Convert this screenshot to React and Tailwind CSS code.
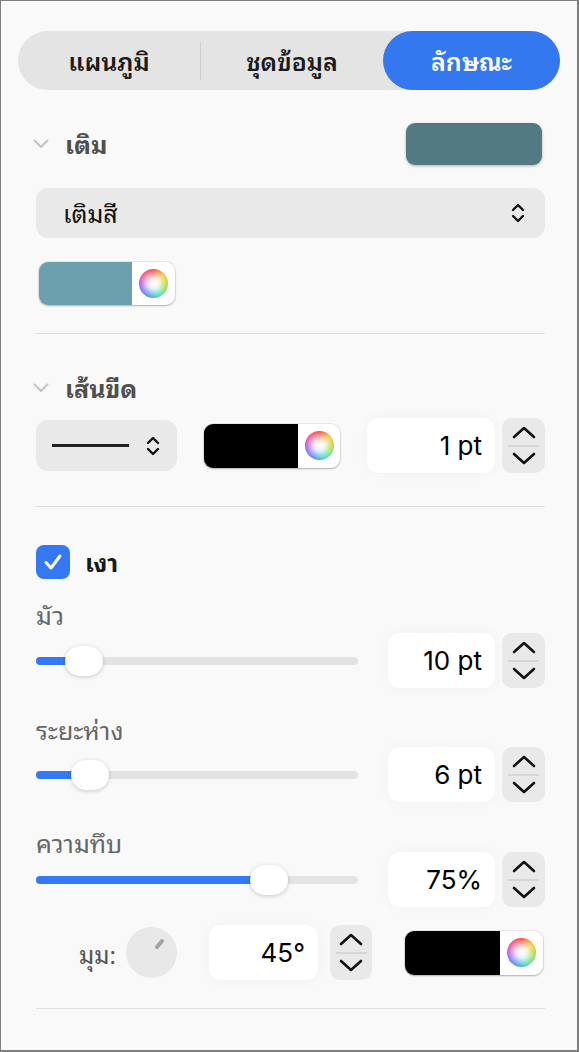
import React from 'react';

const font = "font-['Noto_Sans_Thai_Looped','Loma','Garuda','Tlwg_Typo','Norasi','Waree','Kinnari','Noto_Sans_Thai','Noto_Sans','Inter',sans-serif]";

function ChevronDown() {
  return (
    <svg width="16" height="10" viewBox="0 0 16 10" fill="none">
      <path d="M1.5 1.5L8 8L14.5 1.5" stroke="#c4c4c4" strokeWidth="2" strokeLinecap="round" strokeLinejoin="round" />
    </svg>
  );
}

function UpDown() {
  return (
    <svg width="14" height="22" viewBox="0 0 14 22" fill="none">
      <path d="M2 8L7 3L12 8" stroke="#111" strokeWidth="2.4" strokeLinecap="round" strokeLinejoin="round" />
      <path d="M2 14L7 19L12 14" stroke="#111" strokeWidth="2.4" strokeLinecap="round" strokeLinejoin="round" />
    </svg>
  );
}

function Stepper({ w = 'w-[43px]' }) {
  return (
    <div className={`${w} h-[55px] rounded-[10px] bg-[#e9e9e9] flex flex-col items-center justify-between py-[6px]`}>
      <svg width="26" height="16" viewBox="0 0 26 16" fill="none">
        <path d="M3 13L13 4L23 13" stroke="#111" strokeWidth="2.6" strokeLinecap="round" strokeLinejoin="round" />
      </svg>
      <div className="w-[31px] h-[2px] bg-[#d6d6d6]" />
      <svg width="26" height="16" viewBox="0 0 26 16" fill="none">
        <path d="M3 3L13 12L23 3" stroke="#111" strokeWidth="2.6" strokeLinecap="round" strokeLinejoin="round" />
      </svg>
    </div>
  );
}

function Wheel() {
  return (
    <div className="w-[29px] h-[29px] rounded-full [background-image:radial-gradient(circle,#ffffff_0%,rgba(255,255,255,0.85)_25%,rgba(255,255,255,0)_72%),conic-gradient(#f04a3a,#f7c531,#9be03c,#3fd9b8,#4a8cf0,#a05cf0,#f04a8c,#f04a3a)]" />
  );
}

function ColorWell({ color, w, h, side }) {
  return (
    <div className={`${w} ${h} flex rounded-[9px] overflow-hidden bg-white shadow-[0_1px_2px_rgba(0,0,0,0.25),0_0_0_1px_rgba(0,0,0,0.06)]`}>
      <div className={`flex-1 ${color}`} />
      <div className={`${side} flex items-center justify-center`}>
        <Wheel />
      </div>
    </div>
  );
}

function Field({ value, w }) {
  return (
    <div className={`${w} h-[55px] rounded-[12px] bg-white shadow-[0_0_14px_rgba(0,0,0,0.035)] flex items-center justify-end pr-[13px] text-[26px] text-black font-['Inter',sans-serif]`}>
      {value}
    </div>
  );
}

function SliderRow({ pct, value }) {
  return (
    <div className="h-[55px] flex items-center">
      <div className="relative w-[322px] h-[8px] rounded-full bg-[#e3e3e3]">
        <div className="absolute left-0 top-0 h-full rounded-full bg-[#3478f6]" style={{ width: `${pct}%` }} />
        <div
          className="absolute top-1/2 -translate-y-1/2 -translate-x-1/2 w-[38px] h-[30px] rounded-full bg-white shadow-[0_1px_4px_rgba(0,0,0,0.2)]"
          style={{ left: `${pct}%` }}
        />
      </div>
      <div className="ml-auto flex items-center gap-[7px]">
        <Field value={value} w="w-[107px]" />
        <Stepper />
      </div>
    </div>
  );
}

const sliders = [
  { label: 'มัว', pct: 14.9, value: '10 pt', mt: 'mt-[21px]', rowMt: 'mt-[3px]' },
  { label: 'ระยะห่าง', pct: 16.8, value: '6 pt', mt: 'mt-[27px]', rowMt: 'mt-[2px]' },
  { label: 'ความทึบ', pct: 72.4, value: '75%', mt: 'mt-[26px]', rowMt: '-mt-[6px]' },
];

export default function App() {
  return (
    <div className={`w-[579px] h-[1052px] overflow-hidden bg-[#f9f9f9] border-l border-t border-r-2 border-b-2 border-[#7f7f7f] ${font}`}>
      {/* แท็บ */}
      <div className="mt-[30px] mx-[17px] h-[59px] rounded-full bg-[#e4e4e4] flex items-center text-[25px] font-semibold">
        <div className="flex-1 text-center text-[#1a1a1a]">แผนภูมิ</div>
        <div className="w-px h-[38px] bg-[#cdcdcd]" />
        <div className="flex-1 text-center text-[#1a1a1a]">ชุดข้อมูล</div>
        <div className="w-[177px] h-full rounded-full bg-[#3478f0] text-white flex items-center justify-center">ลักษณะ</div>
      </div>

      <div className="ml-[35px] mr-[32px]">
        {/* เติม */}
        <div className="mt-[33px] h-[42px] flex items-center">
          <div className="-ml-[3px] w-[16px] flex items-center"><ChevronDown /></div>
          <span className="ml-[16px] text-[25px] font-bold text-[#4f4f4f]">เติม</span>
          <div className="ml-auto mr-[3px] w-[136px] h-[42px] rounded-[9px] bg-[#527a83] shadow-[0_1px_3px_rgba(0,0,0,0.3)]" />
        </div>

        <div className="mt-[23px] h-[50px] rounded-[12px] bg-[#e9e9e9] flex items-center pl-[27px] pr-[20px]">
          <span className="text-[25px] text-[#111]">เติมสี</span>
          <div className="ml-auto"><UpDown /></div>
        </div>

        <div className="mt-[24px] ml-[3px]">
          <ColorWell color="bg-[#6ca0ae]" w="w-[136px]" h="h-[43px]" side="w-[43px]" />
        </div>

        <div className="mt-[28px] h-px bg-[#e0e0e0]" />

        {/* เส้นขีด */}
        <div className="mt-[39px] h-[30px] flex items-center">
          <div className="-ml-[3px] w-[16px] flex items-center"><ChevronDown /></div>
          <span className="ml-[16px] text-[25px] font-bold text-[#4f4f4f]">เส้นขีด</span>
        </div>

        <div className="mt-[15px] h-[55px] flex items-center">
          <div className="w-[141px] h-[51px] rounded-[12px] bg-[#e9e9e9] flex items-center pl-[16px] pr-[17px]">
            <div className="w-[77px] h-[3px] bg-[#222]" />
            <div className="ml-auto"><UpDown /></div>
          </div>
          <div className="ml-[27px]">
            <ColorWell color="bg-black" w="w-[136px]" h="h-[44px]" side="w-[42px]" />
          </div>
          <div className="ml-[27px]"><Field value="1 pt" w="w-[128px]" /></div>
          <div className="ml-[7px]"><Stepper /></div>
        </div>

        <div className="mt-[33px] h-px bg-[#e0e0e0]" />

        {/* เงา */}
        <div className="mt-[38px] h-[34px] flex items-center">
          <div className="w-[34px] h-[34px] rounded-[8px] bg-[#3478f6] flex items-center justify-center">
            <svg width="20" height="18" viewBox="0 0 20 18" fill="none">
              <path d="M3 9.5L8 15L17 3" stroke="white" strokeWidth="3" strokeLinecap="round" strokeLinejoin="round" />
            </svg>
          </div>
          <span className="ml-[15px] text-[25px] font-bold text-[#1a1a1a]">เงา</span>
        </div>

        {sliders.map((s) => (
          <div key={s.label}>
            <div className={`${s.mt} h-[30px] flex items-center text-[25px] text-[#666]`}>{s.label}</div>
            <div className={s.rowMt}>
              <SliderRow pct={s.pct} value={s.value} />
            </div>
          </div>
        ))}

        {/* มุม */}
        <div className="mt-[18px] h-[55px] flex items-center">
          <div className="w-[80px] flex justify-end text-[24px] text-[#555]">มุม:</div>
          <div className="ml-[10px] w-[51px] h-[51px] rounded-full bg-[#e8e8e8] flex items-center justify-center">
            <svg width="51" height="51" viewBox="0 0 51 51">
              <path d="M36 14L31 20" stroke="#a3a3a3" strokeWidth="4" strokeLinecap="round" />
            </svg>
          </div>
          <div className="ml-[32px]"><Field value="45°" w="w-[109px]" /></div>
          <div className="ml-[12px]"><Stepper w="w-[42px]" /></div>
          <div className="ml-[33px]">
            <ColorWell color="bg-black" w="w-[138px]" h="h-[44px]" side="w-[43px]" />
          </div>
        </div>

        <div className="mt-[28px] h-px bg-[#e0e0e0]" />
      </div>
    </div>
  );
}
